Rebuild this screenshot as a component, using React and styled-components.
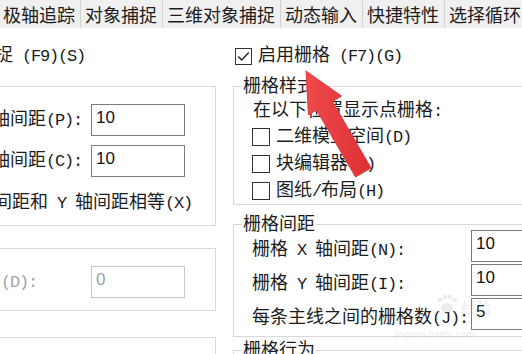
import React from 'react';
import styled, { createGlobalStyle } from 'styled-components';

const Global = createGlobalStyle`
  html, body { margin: 0; padding: 0; background: #fff; }
  body {
    width: 522px; height: 354px; overflow: hidden;
    font-family: "Liberation Serif", "Noto Sans CJK SC", serif;
    color: #1c1c1c;
  }
`;

const Page = styled.div`
  position: relative;
  width: 522px;
  height: 354px;
  overflow: hidden;
  background: #fff;
`;

const TabBar = styled.div`
  display: flex;
  height: 28px;
  margin-left: -1px;
  background: #f0f0f0;
  white-space: nowrap;
`;

const Tab = styled.div`
  flex: none;
  padding: 4px 5px 0 4px;
  font-size: 18px;
  line-height: 24px;
  border-right: 1px solid #d2d2d2;
  color: #1c1c1c;
`;

const Body = styled.div`
  display: grid;
  grid-template-columns: 306px 320px;
  column-gap: 17px;
  margin-left: -90px;
`;

const Column = styled.div`
  display: flex;
  flex-direction: column;
  min-width: 0;
`;

const TopRow = styled.div`
  display: flex;
  align-items: center;
  gap: 6px;
  height: 20px;
  margin-top: 18px;
  padding-left: ${p => p.$pl}px;
  font-size: 18px;
  line-height: 20px;
  white-space: nowrap;
`;

const Box = styled.span`
  flex: none;
  box-sizing: border-box;
  width: ${p => p.$size}px;
  height: ${p => p.$size}px;
  border: 1px solid #333;
  background: #fff;
  display: flex;
  align-items: center;
  justify-content: center;
`;

const Group = styled.fieldset`
  margin: ${p => p.$mt}px 0 0;
  padding: ${p => p.$pt}px 0 ${p => p.$pb}px 8px;
  border: 1px solid #d9d9d9;
  min-width: 0;
  display: flex;
  flex-direction: column;
`;

const Legend = styled.legend`
  padding: 0 1px;
  font-size: 18px;
  line-height: 12px;
  white-space: nowrap;
`;

const Text = styled.div`
  padding-left: ${p => p.$pl}px;
  font-size: 18px;
  line-height: 22px;
  white-space: nowrap;
`;

const CheckRow = styled.div`
  display: flex;
  align-items: center;
  gap: 6px;
  height: ${p => p.$h}px;
  margin-top: ${p => p.$mt || 0}px;
  padding-left: ${p => p.$pl}px;
  font-size: 18px;
  line-height: 22px;
  white-space: nowrap;
`;

const FieldList = styled.div`
  display: flex;
  flex-direction: column;
  gap: ${p => p.$gap}px;
`;

const FieldRow = styled.div`
  display: grid;
  grid-template-columns: ${p => p.$label}px ${p => p.$input}px;
  align-items: center;
  padding-left: ${p => p.$pl}px;
  height: 32px;
`;

const Label = styled.span`
  font-size: 18px;
  line-height: 22px;
  white-space: nowrap;
  margin-top: ${p => p.$shift || 0}px;
  color: ${p => (p.$disabled ? '#a3a3a3' : '#1c1c1c')};
`;

const Field = styled.div`
  box-sizing: border-box;
  height: 32px;
  border: 1px solid ${p => (p.$disabled ? '#c6c6c6' : '#7a7a7a')};
  background: #fff;
  padding: 3px 4px 0;
  font-family: "Liberation Sans", sans-serif;
  font-size: 17px;
  line-height: 20px;
  color: ${p => (p.$disabled ? '#a0a0a0' : '#111')};
`;

const Latin = styled.span`
  font-family: "Liberation Mono", monospace;
  font-size: 17px;
  letter-spacing: -1.2px;
`;

const Overlay = styled.svg`
  position: absolute;
  left: 0;
  top: 0;
  pointer-events: none;
`;

const Watermark = styled.div`
  position: absolute;
  left: ${p => p.$x}px;
  top: ${p => p.$y}px;
  font-family: ${p => (p.$latin ? '"Liberation Sans", sans-serif' : '"Noto Sans CJK SC", sans-serif')};
  font-size: ${p => p.$size}px;
  line-height: 1;
  color: rgba(180, 180, 180, 0.28);
  white-space: nowrap;
  pointer-events: none;
`;

function T({ children }) {
  const parts = String(children).split(/([\x20-\x7e]+)/);
  return parts.map((s, i) => {
    if (!s) return null;
    if (/[\x20-\x7e]/.test(s[0])) return <Latin key={i}>{s}</Latin>;
    return <React.Fragment key={i}>{s}</React.Fragment>;
  });
}

const Check = () => (
  <svg width="15" height="15" viewBox="0 0 15 15">
    <path d="M2.2 7.6 L5.6 11 L12.8 3.4" fill="none" stroke="#222" strokeWidth="1.4" />
  </svg>
);

const tabs = ['极轴追踪', '对象捕捉', '三维对象捕捉', '动态输入', '快捷特性', '选择循环'];

export default function App() {
  return (
    <Page>
      <Global />
      <TabBar>
        {tabs.map(t => (
          <Tab key={t}>{t}</Tab>
        ))}
      </TabBar>
      <Body>
        <Column>
          <TopRow $pl={8}>
            <Box $size={17} />
            <span><T>启用捕捉 (F9)(S)</T></span>
          </TopRow>
          <Group $mt={14} $pt={12} $pb={10}>
            <Legend>捕捉间距</Legend>
            <FieldList $gap={9}>
              <FieldRow $pl={10} $label={162} $input={94}>
                <Label><T>捕捉 X 轴间距(P):</T></Label>
                <Field>10</Field>
              </FieldRow>
              <FieldRow $pl={10} $label={162} $input={94}>
                <Label><T>捕捉 Y 轴间距(C):</T></Label>
                <Field>10</Field>
              </FieldRow>
            </FieldList>
            <CheckRow $h={24} $mt={14} $pl={16}>
              <Box $size={17} />
              <span><T>X 轴间距和 Y 轴间距相等(X)</T></span>
            </CheckRow>
          </Group>
          <Group $mt={16} $pt={12} $pb={12}>
            <Legend>极轴间距</Legend>
            <FieldRow $pl={10} $label={162} $input={94}>
              <Label $disabled><T>极轴距离(D):</T></Label>
              <Field $disabled>0</Field>
            </FieldRow>
          </Group>
          <Group $mt={20} $pt={12} $pb={12}>
            <Legend>捕捉类型</Legend>
            <CheckRow $h={24} $pl={16}>
              <Box $size={17} />
              <span><T>栅格捕捉(R)</T></span>
            </CheckRow>
          </Group>
        </Column>
        <Column>
          <TopRow $pl={2}>
            <Box $size={17}>
              <Check />
            </Box>
            <span><T>启用栅格 (F7)(G)</T></span>
          </TopRow>
          <Group $mt={14} $pt={7} $pb={0}>
            <Legend>栅格样式</Legend>
            <Text $pl={11}><T>在以下位置显示点栅格:</T></Text>
            <CheckRow $h={27} $pl={10}>
              <Box $size={18} />
              <span><T>二维模型空间(D)</T></span>
            </CheckRow>
            <CheckRow $h={27} $pl={10}>
              <Box $size={18} />
              <span><T>块编辑器(K)</T></span>
            </CheckRow>
            <CheckRow $h={27} $pl={10}>
              <Box $size={18} />
              <span><T>图纸/布局(H)</T></span>
            </CheckRow>
          </Group>
          <Group $mt={13} $pt={0} $pb={6}>
            <Legend>栅格间距</Legend>
            <FieldList $gap={2}>
              <FieldRow $pl={10} $label={219} $input={100}>
                <Label $shift={8}><T>栅格 X 轴间距(N):</T></Label>
                <Field>10</Field>
              </FieldRow>
              <FieldRow $pl={10} $label={219} $input={100}>
                <Label $shift={8}><T>栅格 Y 轴间距(I):</T></Label>
                <Field>10</Field>
              </FieldRow>
              <FieldRow $pl={10} $label={219} $input={100}>
                <Label $shift={7}><T>每条主线之间的栅格数(J):</T></Label>
                <Field>5</Field>
              </FieldRow>
            </FieldList>
          </Group>
          <Group $mt={7} $pt={6} $pb={6}>
            <Legend>栅格行为</Legend>
            <CheckRow $h={27} $pl={10}>
              <Box $size={18} />
              <span><T>自适应栅格(A)</T></span>
            </CheckRow>
          </Group>
        </Column>
      </Body>
      <Overlay width="522" height="354" viewBox="0 0 522 354">
        <g fill="rgba(185,185,185,0.28)">
          <ellipse cx="447" cy="308" rx="6" ry="5" />
          <circle cx="440" cy="300" r="2.4" />
          <circle cx="445" cy="297" r="2.4" />
          <circle cx="450" cy="297" r="2.4" />
          <circle cx="455" cy="300" r="2.4" />
        </g>
      </Overlay>
      <Watermark $x={461} $y={299} $size={15}>经验</Watermark>
      <Watermark $x={394} $y={330} $size={10} $latin>jingyan.baidu.com</Watermark>
      <Overlay width="522" height="354" viewBox="0 0 522 354">
        <defs>
          <linearGradient id="arr" x1="0" y1="0" x2="1" y2="0">
            <stop offset="0" stopColor="#f04a4d" />
            <stop offset="1" stopColor="#dc2f34" />
          </linearGradient>
        </defs>
        <polygon
          points="306,71 341.5,96 332.5,101.5 371,168 355.5,177 316.5,110 308.5,115"
          fill="url(#arr)"
          stroke="#e23a3e"
          strokeWidth="1"
          strokeLinejoin="round"
        />
      </Overlay>
    </Page>
  );
}
